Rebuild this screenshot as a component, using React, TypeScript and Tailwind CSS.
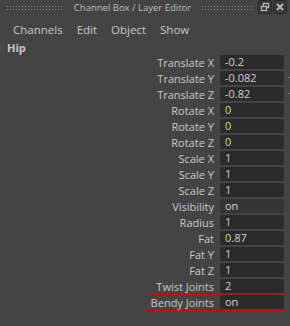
import React from 'react';

const rows: { label: string; value: string; mark?: 'twist' | 'bendy'; light?: boolean; tick?: boolean }[] = [
    { label: 'Translate X', value: '-0.2' },
    { label: 'Translate Y', value: '-0.082', tick: true },
    { label: 'Translate Z', value: '-0.82', tick: true },
    { label: 'Rotate X', value: '0' },
    { label: 'Rotate Y', value: '0' },
    { label: 'Rotate Z', value: '0' },
    { label: 'Scale X', value: '1' },
    { label: 'Scale Y', value: '1' },
    { label: 'Scale Z', value: '1' },
    { label: 'Visibility', value: 'on', light: true },
    { label: 'Radius', value: '1' },
    { label: 'Fat', value: '0.87' },
    { label: 'Fat Y', value: '1' },
    { label: 'Fat Z', value: '1' },
    { label: 'Twist Joints', value: '2', mark: 'twist' },
    { label: 'Bendy Joints', value: 'on', mark: 'bendy' },
];

function Grip({ width }: { width: number }) {
    return (
        <svg width={width} height={6} className="shrink-0">
            <defs>
                <pattern id={`grip${width}`} width="3" height="3" patternUnits="userSpaceOnUse">
                    <rect x="0" y="0" width="1" height="1" fill="#8a8a8a" />
                </pattern>
            </defs>
            <rect width={width} height={6} fill={`url(#grip${width})`} />
        </svg>
    );
}

export default function App() {
    return (
        <div className="w-[290px] h-[326px] bg-[#444444] text-[#c8c8c8] overflow-hidden relative" style={{ fontFamily: '"Open Sans", "DejaVu Sans", sans-serif' }}>
            {/* title bar */}
            <div className="h-[16px] flex items-center">
                <div className="pl-[7px] pt-[1px]"><Grip width={56} /></div>
                <div className="flex-1 text-center text-[9.5px] text-[#bdbdbd] leading-none">Channel Box / Layer Editor</div>
                <div className="pt-[1px]"><Grip width={51} /></div>
                <div className="flex gap-[1px] ml-[5px] mr-[3px] self-start">
                    <div className="w-[14px] h-[14px] border border-[#2a2a2a] rounded-[2px] bg-[#3a3a3a] flex items-center justify-center">
                        <svg width="10" height="10" viewBox="0 0 10 10">
                            <rect x="3.5" y="1.5" width="5" height="4" fill="none" stroke="#bbbbbb" strokeWidth="1.2" />
                            <rect x="1.5" y="4.5" width="5" height="4" fill="#3a3a3a" stroke="#bbbbbb" strokeWidth="1.2" />
                        </svg>
                    </div>
                    <div className="w-[14px] h-[14px] border border-[#2a2a2a] rounded-[2px] bg-[#3a3a3a] flex items-center justify-center">
                        <svg width="10" height="10" viewBox="0 0 10 10">
                            <path d="M2 2 L8 8 M8 2 L2 8" stroke="#bbbbbb" strokeWidth="1.8" />
                        </svg>
                    </div>
                </div>
            </div>

            {/* menu */}
            <div className="h-[22px] flex items-center text-[11.5px] pl-[13px] gap-[14px] mt-[3px]">
                <span>Channels</span>
                <span>Edit</span>
                <span>Object</span>
                <span>Show</span>
            </div>

            <div className="pl-[7px] text-[11px] font-bold leading-[14px] text-[#c8c8c8]">Hip</div>

            {/* channels */}
            <div className="flex flex-col">
                {rows.map(r => (
                    <div key={r.label} className="h-[16px] flex items-start justify-end pr-[6px] relative">
                        <div className="flex items-start relative">
                            <span className="text-[11px] leading-[15px] text-right text-[#c8c8c8]">{r.label}</span>
                            <div className={`ml-[6px] w-[64px] h-[14px] rounded-[2px] ${r.light ? 'bg-[#353535]' : 'bg-[#2b2b2b]'} text-[11px] leading-[14px] text-[#d0d0d0] pl-[5px]`}>
                                {r.value}
                            </div>
                            {r.mark && (
                                <div className={`absolute ${r.mark === 'twist' ? 'left-[-4px]' : 'left-[-5px]'} right-[-1px] bottom-[-2px] h-[2px] bg-[#d40000] rounded-full`} />
                            )}
                        </div>
                        {r.tick && <div className="absolute right-0 top-[6px] w-[2px] h-[1px] bg-[#6a7a8a]" />}
                    </div>
                ))}
            </div>
        </div>
    );
}
